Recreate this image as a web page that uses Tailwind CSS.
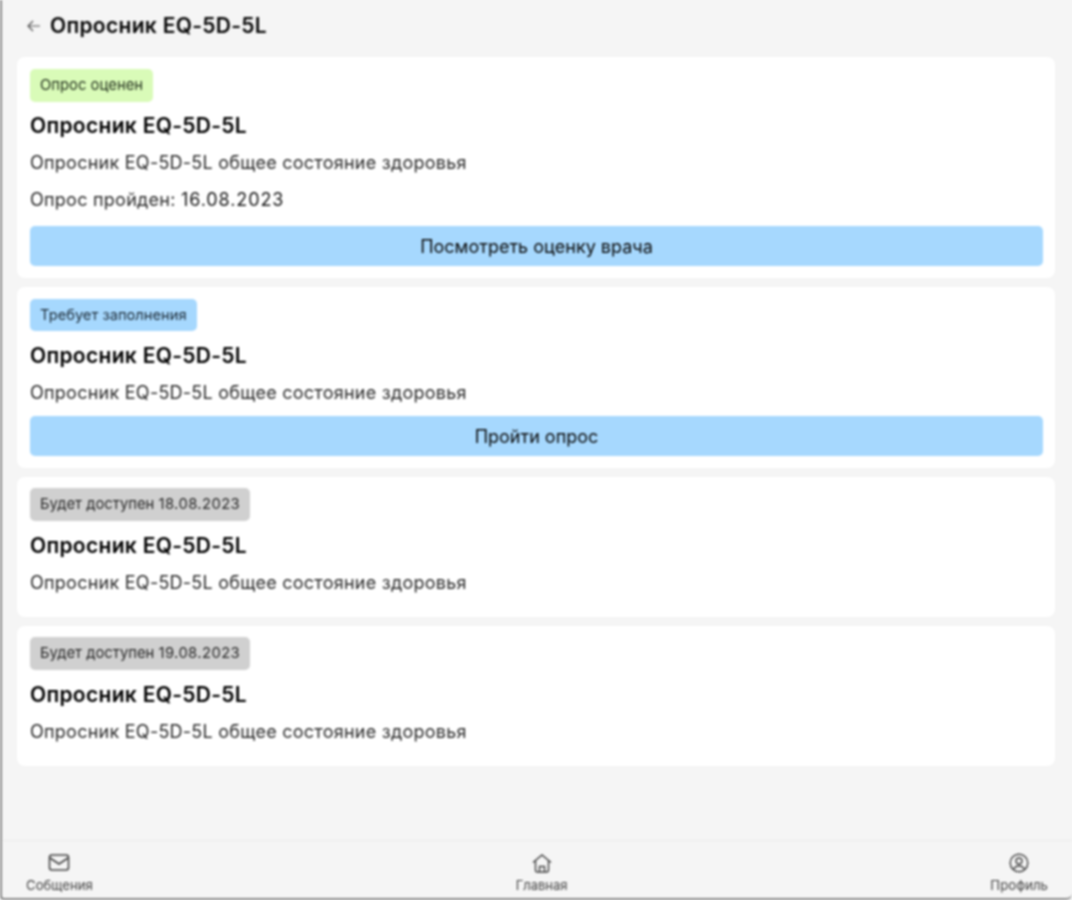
<!DOCTYPE html>
<html lang="ru">
<head>
    <meta charset="UTF-8">
    <title>Опросник EQ-5D-5L</title>
    <script src="https://cdn.jsdelivr.net/npm/@tailwindcss/browser@4"></script>
</head>
<body class="bg-[#f5f5f5] font-['Inter',sans-serif]">
    <div class="w-[1072px] h-[900px] overflow-hidden border-l-[2px] border-b-[2px] border-[#8a8a8a] rounded-bl-[4px] rounded-br-[6px] blur-[0.8px]">
        <div class="w-full h-full flex flex-col">

            <!-- Header -->
            <header class="h-[57px] shrink-0 flex items-center pl-[24px] pb-[5px] gap-[8px]">
                <svg class="w-[16px] h-[16px] text-[#555]" viewBox="0 0 16 16" fill="none" stroke="currentColor" stroke-width="1.2">
                    <path d="M14 8H2M7 3L2 8l5 5"/>
                </svg>
                <h1 class="text-[21px] leading-[24px] tracking-[0.3px] font-semibold text-[#050505]">Опросник EQ-5D-5L</h1>
            </header>

            <main class="flex-1 flex flex-col gap-[9px] pl-[15px] pr-[17px]">
                <!-- Card 1 -->
                <section class="bg-white rounded-[8px] h-[221px] px-[13px] pt-[12px]">
                    <span class="inline-flex items-center h-[33px] px-[10px] rounded-[5px] bg-[#d9fbb8] text-[14.8px] text-[#1f2c1a]">Опрос оценен</span>
                    <h2 class="mt-[9px] text-[21px] leading-[30px] tracking-[0.3px] font-semibold text-black">Опросник EQ-5D-5L</h2>
                    <p class="mt-[7px] text-[18px] leading-[30px] tracking-[0.25px] text-[#2a2a2a]">Опросник EQ-5D-5L общее состояние здоровья</p>
                    <p class="mt-[7px] text-[18px] leading-[30px] tracking-[0.25px] text-[#2a2a2a]">Опрос пройден: <span class="tracking-[0.9px] text-[#151515]">16.08.2023</span></p>
                    <button class="mt-[11px] w-[1013px] h-[40px] rounded-[5px] bg-[#a6d8fe] text-[18px] text-[#0a0a0a]">Посмотреть оценку врача</button>
                </section>

                <!-- Card 2 -->
                <section class="bg-white rounded-[8px] h-[181px] px-[13px] pt-[12px]">
                    <span class="inline-flex items-center h-[32px] px-[10px] rounded-[5px] bg-[#a6d8fe] text-[14.7px] text-[#1c2a36]">Требует заполнения</span>
                    <h2 class="mt-[10px] text-[21px] leading-[30px] tracking-[0.3px] font-semibold text-black">Опросник EQ-5D-5L</h2>
                    <p class="mt-[7px] text-[18px] leading-[30px] tracking-[0.25px] text-[#2a2a2a]">Опросник EQ-5D-5L общее состояние здоровья</p>
                    <button class="mt-[8px] w-[1013px] h-[40px] rounded-[5px] bg-[#a6d8fe] text-[18px] text-[#0a0a0a]">Пройти опрос</button>
                </section>

                <!-- Card 3 -->
                <section class="bg-white rounded-[8px] h-[140px] px-[13px] pt-[11px]">
                    <span class="inline-flex items-center h-[33px] px-[10px] rounded-[5px] bg-[#d0d0d0] text-[14.8px] text-[#262626]"><span>Будет доступен <span class="tracking-[0.4px]">18.08.2023</span></span></span>
                    <h2 class="mt-[10px] text-[21px] leading-[30px] tracking-[0.3px] font-semibold text-black">Опросник EQ-5D-5L</h2>
                    <p class="mt-[7px] text-[18px] leading-[30px] tracking-[0.25px] text-[#2a2a2a]">Опросник EQ-5D-5L общее состояние здоровья</p>
                </section>

                <!-- Card 4 -->
                <section class="bg-white rounded-[8px] h-[140px] px-[13px] pt-[11px]">
                    <span class="inline-flex items-center h-[33px] px-[10px] rounded-[5px] bg-[#d0d0d0] text-[14.8px] text-[#262626]"><span>Будет доступен <span class="tracking-[0.4px]">19.08.2023</span></span></span>
                    <h2 class="mt-[10px] text-[21px] leading-[30px] tracking-[0.3px] font-semibold text-black">Опросник EQ-5D-5L</h2>
                    <p class="mt-[7px] text-[18px] leading-[30px] tracking-[0.25px] text-[#2a2a2a]">Опросник EQ-5D-5L общее состояние здоровья</p>
                </section>
            </main>

            <!-- Bottom nav -->
            <nav class="h-[58px] shrink-0 border-t border-[#ececec] flex justify-between items-start pl-[24px] pr-[24px] pt-[11px] text-[#444]">
                <a class="flex flex-col items-center gap-[3px]">
                    <svg class="w-[24px] h-[22px]" viewBox="0 0 24 22" fill="none" stroke="currentColor" stroke-width="1.6">
                        <rect x="2.5" y="3" width="19" height="15" rx="2.5"/>
                        <path d="M3 6l9 6 9-6"/>
                    </svg>
                    <span class="text-[13.2px] leading-[17px]">Собщения</span>
                </a>
                <a class="flex flex-col items-center gap-[3px]">
                    <svg class="w-[24px] h-[22px]" viewBox="0 0 24 22" fill="none" stroke="currentColor" stroke-width="1.4">
                        <path d="M3 10.500L12 3l9 7.500"/>
                        <path d="M5.500 8.500V18a2 2 0 0 0 2 2h9a2 2 0 0 0 2-2V8.500"/>
                        <path d="M9.500 20v-5.500h5V20"/>
                    </svg>
                    <span class="text-[13px] leading-[17px]">Главная</span>
                </a>
                <a class="flex flex-col items-center gap-[3px]">
                    <svg class="w-[24px] h-[22px]" viewBox="0 0 24 22" fill="none" stroke="currentColor" stroke-width="1.4">
                        <circle cx="12" cy="11" r="8.800"/>
                        <circle cx="12" cy="9" r="3"/>
                        <path d="M6.500 17.500c1-2.600 3-3.500 5.500-3.500s4.500.900 5.500 3.500"/>
                    </svg>
                    <span class="text-[13.2px] leading-[17px]">Профиль</span>
                </a>
            </nav>
        </div>
    </div>
</body>
</html>
